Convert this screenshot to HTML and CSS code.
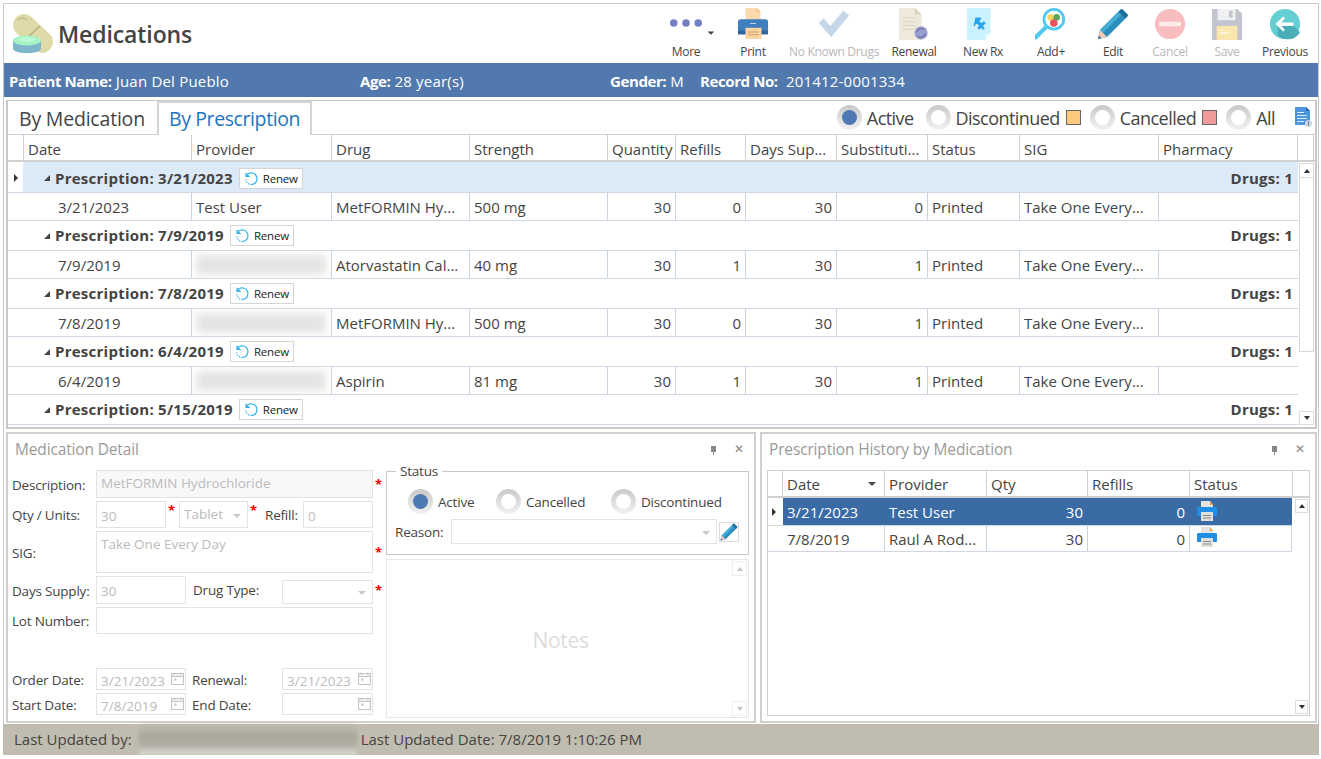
FILE: index.html
```html
<!DOCTYPE html>
<html lang="en">
<head>
<meta charset="utf-8">
<title>Medications</title>
<link rel="stylesheet" href="styles.css">
</head>
<body>
<svg class="defs" width="0" height="0">
  <defs>
    <symbol id="pencil" viewBox="0 0 32 32">
      <path d="M1 31l2-9L23 2l2-1 6 6-1 2L10 29z" fill="#2b8fbd"/>
      <path d="M23 2l2-1 6 6-1 2-2 1-6-6z" fill="#1c6f99"/>
      <path d="M3 22L21 4l3 3L6 25z" fill="#46aed6"/>
      <path d="M1 31l2-9 7 7z" fill="#f5c8b8"/>
      <path d="M1 31l.8-3.6 2.8 2.8z" fill="#2b6f94"/>
    </symbol>
    <symbol id="renew" viewBox="0 0 16 16">
      <path d="M3.500 3.400A6.300 6.300 0 1 1 8 14.500" fill="none" stroke="#2fb2ee" stroke-width="1.300"/>
      <path d="M8 14.500A6.300 6.300 0 0 1 1.800 8" fill="none" stroke="#2fb2ee" stroke-width="1.300" stroke-dasharray="1.300 1.200"/>
      <path d="M1.500 1.200v5.300h5.300z" fill="#2fb2ee"/>
    </symbol>
    <symbol id="cal" viewBox="0 0 12 12">
      <path d="M.5 1.500h11v10H.5zM.5 4h11M3 .5v2M9 .5v2" fill="none" stroke="#c4c4c4"/>
      <path d="M3 6h2v2H3z" fill="#c4c4c4"/>
    </symbol>
    <symbol id="smallprint" viewBox="0 0 20 20">
      <path d="M4 0h9l3 4v5H4z" fill="#e3e3e3"/>
      <path d="M13 0l3 4h-3z" fill="#f5a13c"/>
      <rect x="0" y="6" width="20" height="9" rx="1" fill="#1e8ee6"/>
      <path d="M4 11h12v9H4z" fill="#e0e0e0"/>
      <path d="M6 14h8v1H6zM6 16.500h8v1H6z" fill="#8a8a8a"/>
    </symbol>
  </defs>
</svg>

<div class="app">
  <header class="top">
    <div class="brand">
      <svg class="logo" viewBox="0 0 42 40" aria-hidden="true">
        <path d="M12 11L30 28" stroke="#dfdaa8" stroke-width="22" stroke-linecap="round"/>
        <path d="M17 22L28 12" stroke="#b3ad7e" stroke-width="1.300"/>
        <path d="M5 6q5-4 10 0" fill="none" stroke="#b3ad7e"/>
        <path d="M1 26v8q0 5 14 5t14-5v-8z" fill="#7fb6cb"/>
        <ellipse cx="15" cy="26.500" rx="14" ry="5" fill="#a4f3c5"/>
        <ellipse cx="15" cy="25.500" rx="9" ry="2.500" fill="#b9f8d4"/>
      </svg>
      <h1 class="page-title">Medications</h1>
    </div>
    <nav class="toolbar">
      <div class="tool">
        <svg class="tool-icon" viewBox="0 0 56 34"><circle cx="15" cy="16" r="4" fill="#7480c2"/><circle cx="28" cy="16" r="4" fill="#7480c2"/><circle cx="41" cy="16" r="4" fill="#7480c2"/><path d="M51 25h7l-3.500 3.500z" fill="#444"/></svg>
        <span>More</span>
      </div>
      <div class="tool">
        <svg class="tool-icon" viewBox="0 0 34 34"><path d="M9 0h12l4 4v10H9z" fill="#fbd9ac"/><path d="M21 0l4 4h-4z" fill="#f4bd80"/><rect x="1" y="12" width="32" height="16" rx="3" fill="#3f7fbd"/><path d="M1 24h32v4H1z" fill="#2f659c"/><path d="M9 21h17v12H9z" fill="#fbd4a3"/><path d="M12 25h11v1H12zM12 28h11v1H12z" fill="#cf9a63"/><path d="M14 16h6v1h-6z" fill="#cfe0f0"/></svg>
        <span>Print</span>
      </div>
      <div class="tool off">
        <svg class="tool-icon" viewBox="0 0 34 34"><path d="M1 16l5-5 7 8L27 3l6 5-19 23z" fill="#c6d6e9"/></svg>
        <span>No Known Drugs</span>
      </div>
      <div class="tool">
        <svg class="tool-icon" viewBox="0 0 34 34"><path d="M1 0h17l7 7v27H1z" fill="#eee9da"/><path d="M18 0l7 7h-7z" fill="#d7d1bd"/><path d="M5 10h14v1H5zM5 14h14v1H5zM5 18h14v1H5zM5 22h11v1H5z" fill="#d8d2bd"/><circle cx="24.500" cy="26.500" r="7" fill="#9b9fd2"/><path d="M20 26a5 5 0 0 1 8-3M29 27a5 5 0 0 1-8 3" fill="none" stroke="#6c70ad" stroke-width="1.300"/></svg>
        <span>Renewal</span>
      </div>
      <div class="tool">
        <svg class="tool-icon" viewBox="4 0 34 34"><path d="M4 0h25v27l-6 7H4z" fill="#c9f1fe"/><path d="M23 34l1-7h5z" fill="#e9fbff"/><path d="M13 10h6v2l-2 2 2 2 3-2 2 2-3 3 2 3-2 1-2-2-2 2-2-2 2-2-2-2h-2v2h-2z" fill="#2aa6ec"/></svg>
        <span>New Rx</span>
      </div>
      <div class="tool">
        <svg class="tool-icon" viewBox="0 0 34 34"><path d="M1 31L12 20" stroke="#52c9ee" stroke-width="4.500" stroke-linecap="round"/><circle cx="20" cy="12" r="10.500" fill="#fff" stroke="#52c9ee" stroke-width="3"/><circle cx="16.500" cy="10" r="3.500" fill="#f6d761"/><circle cx="23" cy="10" r="3.500" fill="#5aa95a"/><circle cx="20" cy="16" r="4" fill="#e8505b"/></svg>
        <span>Add+</span>
      </div>
      <div class="tool">
        <svg class="tool-icon"><use href="#pencil"/></svg>
        <span>Edit</span>
      </div>
      <div class="tool off">
        <svg class="tool-icon" viewBox="0 0 34 34"><circle cx="17" cy="17" r="16" fill="#f7bdbf"/><rect x="5" y="14.500" width="24" height="5" rx="2.500" fill="#fdeeee"/></svg>
        <span>Cancel</span>
      </div>
      <div class="tool off">
        <svg class="tool-icon" viewBox="0 0 34 34"><path d="M1 1h27l5 5v28H1z" fill="#c2c5d0"/><path d="M7 1h19v12H7z" fill="#f0f0f0"/><path d="M19 3h4v7h-4z" fill="#c2c5d0"/><path d="M6 19h22v15H6z" fill="#f9e6ad"/><path d="M9 23h6v1H9zM9 26h10v1H9z" fill="#fff"/></svg>
        <span>Save</span>
      </div>
      <div class="tool">
        <svg class="tool-icon" viewBox="0 0 34 34"><circle cx="17" cy="17" r="16" fill="#64ced3"/><path d="M9 17l15 0 9 9a16 16 0 0 1-16 7 16 16 0 0 1-8-4z" fill="#4badb8"/><path d="M7 17l8-8 2 2-4 4.500h13v3.500H13l4 4-2 2z" fill="#fff"/></svg>
        <span>Previous</span>
      </div>
    </nav>
  </header>

  <section class="patient">
    <span class="pf pf-name"><b>Patient Name:</b> Juan Del Pueblo</span>
    <span class="pf pf-age"><b>Age:</b> 28 year(s)</span>
    <span class="pf pf-gender"><b>Gender:</b> M</span>
    <span class="pf"><b>Record No:</b>&nbsp; 201412-0001334</span>
  </section>

  <section class="main-panel">
    <div class="tabbar">
      <button class="tab">By Medication</button>
      <button class="tab tab-on">By Prescription</button>
      <div class="filters">
        <span class="radio radio-lg radio-on"></span><span class="flabel">Active</span>
        <span class="radio radio-lg"></span><span class="flabel">Discontinued</span><span class="swatch sw-orange"></span>
        <span class="radio radio-lg"></span><span class="flabel">Cancelled</span><span class="swatch sw-red"></span>
        <span class="radio radio-lg"></span><span class="flabel">All</span>
        <svg class="docinfo" viewBox="0 0 18 20"><path d="M1 0h11l4 4v14H1z" fill="#4d95dc"/><path d="M12 0l4 4h-4z" fill="#2b6aa8"/><path d="M3 5h7v1H3zM3 8h10v1H3zM3 11h10v1H3zM3 14h7v1H3z" fill="#d8ecff"/><circle cx="14.500" cy="16.500" r="3.500" fill="#cfd6dc"/><path d="M14 15.500h1v3h-1zM14 14h1v1h-1z" fill="#4d7ea8"/></svg>
      </div>
    </div>
    <div class="grid">
      <div class="row head">
        <div class="c"></div><div class="c">Date</div><div class="c">Provider</div><div class="c">Drug</div><div class="c">Strength</div><div class="c">Quantity</div><div class="c">Refills</div><div class="c">Days Sup...</div><div class="c">Substituti...</div><div class="c">Status</div><div class="c">SIG</div><div class="c">Pharmacy</div><div class="c"></div>
      </div>
      <div class="grid-body">
        <div class="rows">
          <div class="group group-on"><span class="cursor"></span><span class="expand"></span><b>Prescription: 3/21/2023</b><button class="renew"><svg><use href="#renew"/></svg>Renew</button><b class="count">Drugs: 1</b></div>
          <div class="row data"><div class="c"></div><div class="c ind">3/21/2023</div><div class="c">Test User</div><div class="c">MetFORMIN Hy...</div><div class="c">500 mg</div><div class="c r">30</div><div class="c r">0</div><div class="c r">30</div><div class="c r">0</div><div class="c">Printed</div><div class="c">Take One Every...</div><div class="c"></div></div>
          <div class="group"><span class="cursor none"></span><span class="expand"></span><b>Prescription: 7/9/2019</b><button class="renew"><svg><use href="#renew"/></svg>Renew</button><b class="count">Drugs: 1</b></div>
          <div class="row data"><div class="c"></div><div class="c ind">7/9/2019</div><div class="c"><span class="blur"></span></div><div class="c">Atorvastatin Cal...</div><div class="c">40 mg</div><div class="c r">30</div><div class="c r">1</div><div class="c r">30</div><div class="c r">1</div><div class="c">Printed</div><div class="c">Take One Every...</div><div class="c"></div></div>
          <div class="group"><span class="cursor none"></span><span class="expand"></span><b>Prescription: 7/8/2019</b><button class="renew"><svg><use href="#renew"/></svg>Renew</button><b class="count">Drugs: 1</b></div>
          <div class="row data"><div class="c"></div><div class="c ind">7/8/2019</div><div class="c"><span class="blur"></span></div><div class="c">MetFORMIN Hy...</div><div class="c">500 mg</div><div class="c r">30</div><div class="c r">0</div><div class="c r">30</div><div class="c r">1</div><div class="c">Printed</div><div class="c">Take One Every...</div><div class="c"></div></div>
          <div class="group"><span class="cursor none"></span><span class="expand"></span><b>Prescription: 6/4/2019</b><button class="renew"><svg><use href="#renew"/></svg>Renew</button><b class="count">Drugs: 1</b></div>
          <div class="row data"><div class="c"></div><div class="c ind">6/4/2019</div><div class="c"><span class="blur"></span></div><div class="c">Aspirin</div><div class="c">81 mg</div><div class="c r">30</div><div class="c r">1</div><div class="c r">30</div><div class="c r">1</div><div class="c">Printed</div><div class="c">Take One Every...</div><div class="c"></div></div>
          <div class="group"><span class="cursor none"></span><span class="expand"></span><b>Prescription: 5/15/2019</b><button class="renew"><svg><use href="#renew"/></svg>Renew</button><b class="count">Drugs: 1</b></div>
        </div>
        <div class="vscroll">
          <div class="sb-track"><span class="sb-btn sb-up"></span></div>
          <span class="sb-btn sb-down"></span>
        </div>
      </div>
    </div>
  </section>

  <div class="lower">
    <section class="panel panel-detail">
      <div class="panel-head">
        <span class="panel-title">Medication Detail</span>
        <span class="pin"></span><span class="close">✕</span>
      </div>
      <div class="detail">
        <form class="form">
          <div class="frow fr-desc"><label class="lbl">Description:</label><span class="inp inp-fill grow top-t">MetFORMIN Hydrochloride</span><i class="star">*</i></div>
          <div class="frow fr-qty"><label class="lbl">Qty / Units:</label><span class="inp w70">30</span><i class="star">*</i><span class="inp sel w69 top-t">Tablet</span><i class="star">*</i><label class="lbl-refill">Refill:</label><span class="inp grow">0</span><i class="star ghost">*</i></div>
          <div class="frow fr-sig"><label class="lbl">SIG:</label><span class="inp grow top-t">Take One Every Day</span><i class="star">*</i></div>
          <div class="frow fr-days"><label class="lbl">Days Supply:</label><span class="inp w90">30</span><label class="lbl-mid lbl-drug">Drug Type:</label><span class="inp sel grow drugsel"></span><i class="star">*</i></div>
          <div class="frow fr-lot"><label class="lbl">Lot Number:</label><span class="inp grow"></span><i class="star ghost">*</i></div>
          <div class="frow fr-date fr-order"><label class="lbl">Order Date:</label><span class="inp w90 date">3/21/2023<svg><use href="#cal"/></svg></span><label class="lbl-mid">Renewal:</label><span class="inp grow date">3/21/2023<svg><use href="#cal"/></svg></span><i class="star ghost">*</i></div>
          <div class="frow fr-date"><label class="lbl">Start Date:</label><span class="inp w90 date">7/8/2019<svg><use href="#cal"/></svg></span><label class="lbl-mid">End Date:</label><span class="inp grow date"><svg><use href="#cal"/></svg></span><i class="star ghost">*</i></div>
        </form>
        <div class="side">
          <fieldset class="status">
            <legend>Status</legend>
            <div class="status-radios">
              <span class="radio radio-on"></span><span class="slabel sl1">Active</span>
              <span class="radio"></span><span class="slabel sl2">Cancelled</span>
              <span class="radio"></span><span class="slabel">Discontinued</span>
            </div>
            <div class="reason">
              <label class="lbl-reason">Reason:</label>
              <span class="inp sel reason-sel"></span>
              <span class="pen-btn"><svg><use href="#pencil"/></svg></span>
            </div>
          </fieldset>
          <div class="notes">
            <span class="notes-text">Notes</span>
            <span class="note-sb note-up"></span>
            <span class="note-sb note-down"></span>
          </div>
        </div>
      </div>
    </section>

    <section class="panel panel-history">
      <div class="panel-head">
        <span class="panel-title">Prescription History by Medication</span>
        <span class="pin"></span><span class="close">✕</span>
      </div>
      <div class="hgrid">
        <div class="hrow hhead"><div class="c"></div><div class="c sorted">Date</div><div class="c">Provider</div><div class="c">Qty</div><div class="c">Refills</div><div class="c">Status</div><div class="c"></div></div>
        <div class="hbody">
          <div class="hrows">
            <div class="hrow hdata hsel"><div class="c hmark"><span class="cursor"></span></div><div class="c">3/21/2023</div><div class="c">Test User</div><div class="c r">30</div><div class="c r">0</div><div class="c"><svg class="hprint"><use href="#smallprint"/></svg></div></div>
            <div class="hrow hdata"><div class="c"></div><div class="c">7/8/2019</div><div class="c">Raul A Rod...</div><div class="c r">30</div><div class="c r">0</div><div class="c"><svg class="hprint"><use href="#smallprint"/></svg></div></div>
          </div>
          <div class="hscroll"><span class="sb-btn sb-up"></span><span class="sb-btn sb-down"></span></div>
        </div>
      </div>
    </section>
  </div>

  <footer class="statusbar">
    <span>Last Updated by:</span>
    <span class="blur-dark"></span>
    <span>Last Updated Date: 7/8/2019 1:10:26 PM</span>
  </footer>
</div>
</body>
</html>
```

FILE: styles.css
```css
* { box-sizing: border-box; }
html, body { margin: 0; padding: 0; background: #fff; }
body {
  font-family: "Open Sans", "Noto Sans", "Liberation Sans", sans-serif;
  color: #444;
  overflow: hidden;
}
.defs { position: absolute; }
.app {
  margin: 3px 0 0 3px;
  width: 1316px;
  height: 752px;
  border-top: 1px solid #c8c8c8;
  border-left: 1px solid #c8c8c8;
  border-right: 1px solid #c8c8c8;
  display: flex;
  flex-direction: column;
}
.top { height: 59px; display: flex; justify-content: space-between; }
.brand { display: flex; align-items: flex-start; }
.logo { width: 42px; height: 40px; margin: 10px 0 0 8px; }
.page-title { margin: 15px 0 0 4px; font-size: 23px; line-height: 31px; font-weight: 600; color: #444; letter-spacing: -.1px; }
.toolbar {
  display: grid;
  grid-template-columns: 56px 78px 84px 76px 62px 74px 50px 64px 50px 66px;
}
.tool {
  display: flex;
  flex-direction: column;
  align-items: center;
  padding-top: 4px;
  font-size: 12px;
  line-height: 16px;
  color: #444;
  white-space: nowrap;
  min-width: 0;
}
.tool span { margin-top: 4px; letter-spacing: -.3px; }
.tool-icon { width: 32px; height: 32px; display: block; flex: none; }
.tool:first-child .tool-icon { width: 56px; }
.tool.off { color: #b8b8b8; }

.patient {
  height: 34px;
  background: #5279ae;
  color: #fff;
  display: flex;
  align-items: center;
  padding: 1px 0 0 5px;
  font-size: 15px;
  letter-spacing: .2px;
  white-space: nowrap;
}
.pf b { font-weight: 700; letter-spacing: -.4px; }
.pf-name { width: 351px; }
.pf-age { width: 250px; }
.pf-gender { width: 90px; }

.main-panel {
  margin: 3px 1px 0 2px;
  height: 329px;
  border: 2px solid #c8c8c8;
  border-top-width: 1px;
  display: flex;
  flex-direction: column;
  overflow: hidden;
}
.tabbar { height: 34px; display: flex; position: relative; align-items: stretch; flex: none; }
.tab {
  font: inherit;
  font-size: 19.500px;
  letter-spacing: -.2px;
  color: #444;
  width: 149px;
  padding: 2px 0 0 11px;
  text-align: left;
  background: #fff;
  border: 0;
  border-bottom: 1px solid #d0d0d0;
  margin: 0;
  white-space: nowrap;
}
.tab-on {
  width: 155px;
  padding: 0 0 2px 10px;
  letter-spacing: -.4px;
  color: #1d75bd;
  border: 2px solid #d4d4d4;
  border-bottom: 0;
  background: #fff;
}
.filters {
  flex: 1;
  display: flex;
  align-items: center;
  justify-content: flex-end;
  border-bottom: 1px solid #d0d0d0;
  padding-right: 3px;
  font-size: 18px;
  letter-spacing: -.55px;
}
.radio {
  width: 25px;
  height: 25px;
  border-radius: 50%;
  flex: none;
  background: linear-gradient(#c9c9c9, #f2f2f2);
  display: flex;
  align-items: center;
  justify-content: center;
}
.radio::after {
  content: "";
  width: 15px;
  height: 15px;
  border-radius: 50%;
  background: #fff;
}
.radio-on::after { background: #4c79b4; }
.flabel { margin-left: 5px; margin-right: 8px; }
.radio-on + .flabel { margin-right: 12px; }
.swatch {
  width: 15px;
  height: 15px;
  border: 1px solid #666;
  margin-right: 9px;
  margin-left: -2px;
}
.sw-orange { background: #fdc97c; }
.sw-red { background: #f09a9c; }
.docinfo { width: 18px; height: 20px; margin-left: 11px; margin-bottom: 2px; }

.grid { flex: 1; display: flex; flex-direction: column; min-height: 0; }
.row {
  display: grid;
  grid-template-columns: 16px 168px 140px 138px 138px 68px 70px 91px 91px 92px 139px 139px;
  font-size: 15px;
}
.head {
  grid-template-columns: 16px 168px 140px 138px 138px 68px 70px 91px 91px 92px 139px 139px 16px;
  grid-template-rows: 25px;
  height: 27px;
  line-height: 25px;
  border-bottom: 2px solid #d0d0d0;
  flex: none;
}
.head .c { padding-top: 2px; }
.c {
  padding: 0 4px;
  white-space: nowrap;
  overflow: hidden;
  border-right: 1px solid #d0d0d0;
  min-width: 0;
}
.grid-body { flex: 1; display: flex; min-height: 0; overflow: hidden; }
.rows { width: 1290px; flex: none; }
.group {
  height: 30px;
  display: flex;
  align-items: center;
  font-size: 15px;
  letter-spacing: .25px;
  border-bottom: 1px solid #cfd8e2;
  padding: 0 5px 0 0;
  position: relative;
}
.group b { font-weight: 700; margin-bottom: 2px; }
.group-on { background: linear-gradient(to right, #fff 15px, #dce9f7 15px); height: 31px; padding-top: 2px; }
.group-on b { margin-bottom: 0; }
.cursor {
  width: 0;
  height: 0;
  border-left: 4px solid #333;
  border-top: 4px solid transparent;
  border-bottom: 4px solid transparent;
  margin-left: 6px;
  flex: none;
}
.cursor.none { border-left-color: transparent; }
.expand {
  width: 0;
  height: 0;
  border-bottom: 6px solid #444;
  border-left: 6px solid transparent;
  margin-left: 26px;
  margin-right: 5px;
  flex: none;
}
.renew {
  font: inherit;
  font-size: 11.500px;
  letter-spacing: -.2px;
  height: 21px;
  padding: 0 4px;
  margin-left: 6px;
  border: 1px solid #d5d5d5;
  background: #fff;
  color: #222;
  display: flex;
  align-items: center;
  gap: 4px;
}
.renew svg { width: 15px; height: 15px; }
.count { margin-left: auto; }
.data { height: 28px; line-height: 28px; border-bottom: 1px solid #cfd8e2; }
.data .c { border-right-color: #c9d4e0; }
.data .c:first-child, .data .c:last-child { border-right: 1px solid transparent; }
.ind { padding-left: 34px; }
.r { text-align: right; }
.blur {
  display: block;
  width: 130px;
  height: 20px;
  margin-top: 4px;
  background: #e4e4e4;
  filter: blur(4px);
}
.vscroll {
  width: 15px;
  margin-left: 1px;
  display: flex;
  flex-direction: column;
  padding-top: 1px;
  justify-content: space-between;
}
.sb-track { height: 189px; border: 1px solid #d8d8d8; flex: none; }
.sb-track .sb-btn { border-width: 0 0 1px; height: 14px; }
.sb-btn {
  height: 14px;
  flex: none;
  display: flex;
  align-items: center;
  justify-content: center;
  border: 1px solid #dcdcdc;
  background: #fff;
}
.sb-btn::after {
  content: "";
  width: 0;
  height: 0;
  border-left: 3px solid transparent;
  border-right: 3px solid transparent;
}
.sb-up::after { border-bottom: 4px solid #333; }
.sb-down::after { border-top: 4px solid #333; }
.vscroll .sb-down { margin-bottom: 2px; }

.lower { display: flex; height: 291px; margin: 3px 1px 0 2px; gap: 4px; }
.panel { border: 2px solid #d0d0d0; height: 291px; min-width: 0; }
.panel-detail { width: 750px; }
.panel-history { flex: 1; }
.panel-head { display: flex; align-items: center; height: 34px; padding: 0 10px 4px 7px; }
.panel-title { font-size: 15.500px; color: #9a9a9a; letter-spacing: -.15px; flex: 1; }
.pin {
  width: 5px;
  height: 6px;
  background: #888;
  margin-right: 18px;
  position: relative;
}
.pin::after {
  content: "";
  position: absolute;
  left: 2px;
  top: 6px;
  width: 1px;
  height: 3px;
  background: #888;
}
.close { font-size: 12px; color: #888; line-height: 12px; }
.detail { display: flex; }
.form { width: 378px; padding: 2px 0 0 4px; flex: none; }
.frow { display: flex; align-items: stretch; font-size: 13.500px; letter-spacing: -.2px; }
.lbl { width: 84px; flex: none; align-self: center; white-space: nowrap; padding-top: 1px; }
.fr-desc { height: 28px; margin-bottom: 3px; }
.fr-qty { height: 27px; margin-bottom: 3px; }
.fr-sig { height: 42px; margin-bottom: 3px; }
.fr-days { height: 28px; margin-bottom: 3px; }
.fr-lot { height: 27px; margin-bottom: 34px; }
.fr-date { height: 22px; margin-bottom: 3px; }
.inp {
  border: 1px solid #e3e3e3;
  color: #bbb;
  padding: 2px 4px 0;
  display: flex;
  align-items: center;
  background: #fff;
  position: relative;
  font-size: 13.500px;
  letter-spacing: 0;
  min-width: 0;
  white-space: nowrap;
}
.grow { flex: 1; }
.top-t { align-items: flex-start; padding-top: 3px; }
.inp-fill { background: #f8f8f8; }
.w70 { width: 70px; flex: none; }
.w69 { width: 69px; flex: none; }
.w90 { width: 90px; flex: none; }
.star { width: 13px; padding-left: 2px; flex: none; color: #e00; font-style: normal; font-weight: 700; font-size: 13px; }
.ghost { visibility: hidden; }
.fr-desc .star, .fr-sig .star, .fr-days .star { align-self: center; }
.sel::after {
  content: "";
  position: absolute;
  right: 6px;
  top: 50%;
  margin-top: -1px;
  border-top: 4px solid #c8c8c8;
  border-left: 4px solid transparent;
  border-right: 4px solid transparent;
}
.lbl-refill { width: 38px; margin-left: 4px; flex: none; align-self: center; padding-top: 1px; }
.lbl-mid { width: 96px; padding-left: 6px; flex: none; align-self: center; white-space: nowrap; }
.lbl-drug { padding-left: 7px; }
.fr-days .drugsel { margin-top: 4px; }
.date { padding-top: 3px; }
.date svg { position: absolute; right: 1px; top: 3px; width: 13px; height: 13px; }
.fr-date .lbl-mid { padding-top: 1px; }
.side { width: 363px; flex: none; }
.status {
  margin: 3px 0 0;
  padding: 0 0 0 8px;
  border: 1px solid #c8c8c8;
  height: 84px;
  position: relative;
  min-width: 0;
}
.status legend { font-size: 13.500px; color: #444; padding: 0 4px; margin-left: 1px; line-height: 16px; letter-spacing: -.2px; position: absolute; top: -9px; background: #fff; }
.status-radios { display: flex; align-items: center; padding: 17px 0 0 13px; font-size: 13.500px; letter-spacing: -.2px; }
.slabel { margin-left: 5px; }
.sl1 { width: 40px; margin-right: 18px; }
.sl2 { width: 62px; margin-right: 23px; }
.reason { display: flex; align-items: center; margin-top: 5px; font-size: 13.500px; letter-spacing: -.2px; }
.lbl-reason { width: 56px; flex: none; }
.reason-sel { width: 266px; height: 25px; flex: none; }
.pen-btn { width: 20px; height: 20px; margin-left: 2px; border: 1px solid #ddd; display: block; flex: none; }
.pen-btn svg { width: 18px; height: 18px; display: block; }
.notes {
  margin-top: 4px;
  height: 159px;
  border: 1px solid #e6e6e6;
  position: relative;
  display: flex;
  align-items: center;
  justify-content: center;
  padding: 3px 14px 0 0;
}
.notes-text { font-size: 21px; color: #dcdcdc; letter-spacing: -.3px; }
.note-sb {
  position: absolute;
  right: 1px;
  width: 15px;
  height: 15px;
  border: 1px solid #efefef;
  display: flex;
  align-items: center;
  justify-content: center;
}
.note-sb::after { content: ""; border-left: 3px solid transparent; border-right: 3px solid transparent; }
.note-up { top: 1px; }
.note-up::after { border-bottom: 4px solid #c4c4c4; }
.note-down { bottom: 1px; }
.note-down::after { border-top: 4px solid #c4c4c4; }

.hgrid {
  margin: 2px 5px 0 5px;
  height: 246px;
  border: 1px solid #d0d0d0;
  display: flex;
  flex-direction: column;
}
.hrow {
  display: grid;
  grid-template-columns: 15px 102px 102px 101px 102px 102px;
  font-size: 15px;
}
.hhead {
  grid-template-columns: 15px 102px 102px 101px 102px 103px 17px;
  grid-template-rows: 25px;
  height: 27px;
  line-height: 25px;
  border-bottom: 2px solid #d0d0d0;
  flex: none;
}
.hhead .c { padding-top: 1px; }
.sorted { position: relative; }
.sorted::after {
  content: "";
  position: absolute;
  right: 8px;
  top: 11px;
  border-top: 4px solid #444;
  border-left: 4px solid transparent;
  border-right: 4px solid transparent;
}
.hbody { flex: 1; display: flex; min-height: 0; }
.hrows { width: 524px; margin-right: 2px; flex: none; }
.hdata { height: 28px; line-height: 28px; border-bottom: 1px solid #cfd8e2; }
.hdata:nth-child(2) { height: 26px; line-height: 26px; }
.hdata .c { border-right-color: #c9d4e0; }
.hdata .c:first-child { border-right: 0; }
.hsel { background: linear-gradient(to right, #fff 15px, #3b6ba5 15px); color: #fff; }
.hsel .c { border-right-color: #3b6ba5; }
.hmark { display: flex; align-items: center; padding: 0; }
.hmark .cursor { margin-left: 4px; }
.hprint { width: 20px; height: 20px; display: block; margin: 3px 0 0 3px; }
.hdata:nth-child(2) .hprint { margin-top: 1px; }
.hscroll { flex: 1; display: flex; flex-direction: column; justify-content: space-between; padding: 1px; }

.statusbar {
  margin: 1px 0 0 -1px;
  width: 1316px;
  height: 31px;
  background: #c0bdb0;
  display: flex;
  align-items: center;
  padding: 0 0 2px 11px;
  font-size: 15px;
  color: #444;
  white-space: nowrap;
}
.blur-dark {
  width: 218px;
  height: 30px;
  margin: 2px 4px 0 7px;
  background: linear-gradient(#bfbcb0, #a9a79c 35%, #b0aea4 70%, #e6e5e0);
  filter: blur(2px);
}
```
